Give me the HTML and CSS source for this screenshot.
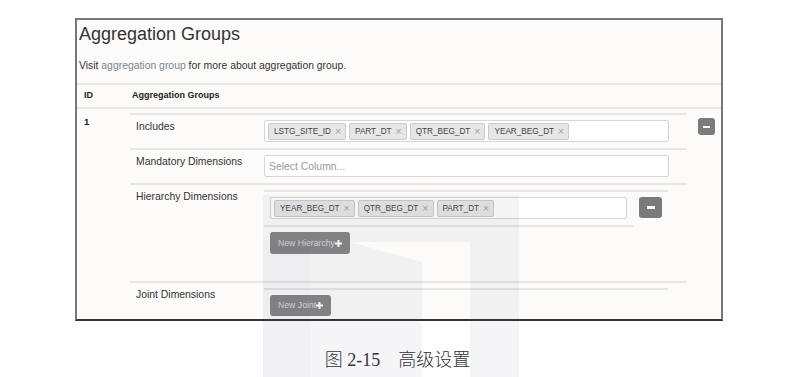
FILE: index.html
```html
<!DOCTYPE html>
<html lang="zh">
<head>
    <meta charset="UTF-8">
    <title>Aggregation Groups</title>
    <link rel="stylesheet" href="styles.css">
</head>
<body>
    <div class="sheet">
        <section class="panel">
            <h2 class="panel-title">Aggregation Groups</h2>
            <p class="panel-hint">Visit <a href="#">aggregation group</a> for more about aggregation group.</p>

            <div class="groups-head">
                <span class="col-id">ID</span>
                <span class="col-name">Aggregation Groups</span>
            </div>

            <div class="group-row">
                <div class="col-id">1</div>
                <div class="dims">
                    <div class="dim-row">
                        <div class="dim-label">Includes</div>
                        <div class="dim-value">
                            <div class="tag-box">
                                <span class="tag">LSTG_SITE_ID<i>×</i></span>
                                <span class="tag">PART_DT<i>×</i></span>
                                <span class="tag">QTR_BEG_DT<i>×</i></span>
                                <span class="tag">YEAR_BEG_DT<i>×</i></span>
                            </div>
                        </div>
                    </div>
                    <div class="dim-row">
                        <div class="dim-label">Mandatory Dimensions</div>
                        <div class="dim-value">
                            <div class="tag-box placeholder">Select Column...</div>
                        </div>
                    </div>
                    <div class="dim-row">
                        <div class="dim-label">Hierarchy Dimensions</div>
                        <div class="dim-value">
                            <div class="nested">
                                <div class="nested-row">
                                    <div class="tag-box short">
                                        <span class="tag">YEAR_BEG_DT<i>×</i></span>
                                        <span class="tag">QTR_BEG_DT<i>×</i></span>
                                        <span class="tag">PART_DT<i>×</i></span>
                                    </div>
                                    <button class="btn-minus big"><span></span></button>
                                </div>
                                <div class="nested-add hier-add">
                                    <button class="btn-new">New Hierarchy<svg width="7" height="7" viewBox="0 0 7 7"><path d="M2.5 0h2v2.5H7v2H4.5V7h-2V4.5H0v-2h2.5z" fill="#fff"/></svg></button>
                                </div>
                            </div>
                        </div>
                    </div>
                    <div class="dim-row">
                        <div class="dim-label">Joint Dimensions</div>
                        <div class="dim-value">
                            <div class="nested">
                                <div class="nested-add joint-add">
                                    <button class="btn-new joint">New Joint<svg width="7" height="7" viewBox="0 0 7 7"><path d="M2.5 0h2v2.5H7v2H4.5V7h-2V4.5H0v-2h2.5z" fill="#fff"/></svg></button>
                                </div>
                            </div>
                        </div>
                    </div>
                </div>
                <div class="col-action">
                    <button class="btn-minus"><span></span></button>
                </div>
            </div>
        </section>

        <p class="caption">图 2-15　高级设置</p>

        <!-- faint print watermark over the figure -->
        <svg class="watermark" width="795" height="377" viewBox="0 0 795 377">
            <polygon points="263,195 519,195 519,377 470,377 470,242 350,242 422,262 422,377 263,377" fill="#5a5a80" fill-opacity="0.06"/>
            <rect x="263" y="240" width="48" height="137" fill="#5a5a80" fill-opacity="0.025"/>
        </svg>
    </div>
</body>
</html>
```

FILE: styles.css
```css
body {
    margin: 0;
    background: #fff;
    font-family: 'Liberation Sans', Arial, sans-serif;
    color: #333;
}
.sheet {
    position: relative;
    width: 795px;
    height: 377px;
    overflow: hidden;
}
.panel {
    margin: 18px 0 0 75px;
    width: 648px;
    height: 303px;
    box-sizing: border-box;
    border: 2px solid #777;
    border-bottom-color: #333;
    background: #fcfbf9;
    overflow: hidden;
}
.panel-title {
    margin: 0;
    padding: 4px 0 0 2px;
    font-size: 18px;
    line-height: 20px;
    font-weight: normal;
    color: #333;
}
.panel-hint {
    margin: 15px 0 0;
    padding: 0 2px 10px;
    font-size: 10.4px;
    line-height: 14px;
    color: #333;
}
.panel-hint a {
    color: #7b8691;
    text-decoration: none;
}
.groups-head {
    display: grid;
    grid-template-columns: 53px 1fr;
    border-top: 2px solid #e6e6e6;
    padding: 3px 0 5px;
    font-size: 9px;
    line-height: 14px;
    font-weight: bold;
    color: #222;
}
.col-id {
    padding-left: 7px;
}
.col-name {
    padding-left: 2px;
}
.group-row {
    display: grid;
    grid-template-columns: 53px 557px 1fr;
    border-top: 2px solid #e6e6e6;
}
.group-row > .col-id {
    padding-top: 6px;
    font-size: 9.5px;
    line-height: 14px;
    font-weight: bold;
    color: #222;
}
.dims {
    padding-top: 4px;
}
.col-action {
    padding: 9px 0 0 11px;
}
.dim-row {
    display: grid;
    grid-template-columns: 128px 1fr;
    border-top: 2px solid #e6e6e6;
}
.dim-label {
    padding: 5px 6px;
    font-size: 10.4px;
    line-height: 14px;
    color: #333;
}
.dim-value {
    padding: 5px 6px 6px;
}
.tag-box {
    display: flex;
    gap: 3px;
    width: 405px;
    height: 22px;
    box-sizing: border-box;
    padding: 1px 3px;
    border: 1px solid #d6d6d6;
    border-radius: 2px;
    background: #fff;
}
.tag-box.short {
    width: 358px;
}
.tag-box.placeholder {
    align-items: center;
    padding: 0 4px;
    font-size: 10.4px;
    color: #9a9a9a;
}
.tag {
    display: inline-flex;
    align-items: center;
    height: 17px;
    box-sizing: border-box;
    margin-top: 1px;
    padding: 0 4px 0 5px;
    border: 1px solid #cbcbcb;
    border-radius: 2px;
    background: #e6e6e6;
    font-size: 8.2px;
    color: #444;
}
.tag i {
    font-style: normal;
    margin-left: 4px;
    font-size: 10.5px;
    line-height: 1;
    color: #a3a3a3;
}
.nested {
    width: 404px;
}
.nested-row {
    display: flex;
    align-items: flex-start;
    gap: 12px;
    border-top: 2px solid #e6e6e6;
    padding: 5px 6px 6px;
}
.nested-add {
    border-top: 2px solid #e6e6e6;
    padding: 5px 6px 21px;
}
.hier-add {
    width: 370px;
    box-sizing: border-box;
}
.joint-add {
    padding-top: 4px;
}
.btn-minus {
    display: flex;
    align-items: center;
    justify-content: center;
    width: 17px;
    height: 17px;
    padding: 0;
    border: none;
    border-radius: 3px;
    background: #7b7b7b;
}
.btn-minus span {
    width: 7px;
    height: 2px;
    background: #fff;
}
.btn-minus.big {
    width: 23px;
    height: 21px;
}
.btn-minus.big span {
    width: 8px;
    height: 3px;
}
.btn-new {
    display: inline-flex;
    align-items: center;
    height: 22px;
    padding: 0 8px 0 8px;
    border: none;
    border-radius: 3px;
    background: #858585;
    font-family: 'Liberation Sans', Arial, sans-serif;
    font-size: 8.7px;
    color: #d9d9d9;
}
.btn-new.joint {
    height: 21px;
}
.caption {
    margin: 30px 0 0;
    text-align: center;
    font-family: 'Liberation Serif', 'Noto Sans CJK SC', serif;
    font-size: 18px;
    line-height: 18px;
    font-weight: 300;
    color: #333;
}
.watermark {
    position: absolute;
    left: 0;
    top: 0;
    pointer-events: none;
}
```
